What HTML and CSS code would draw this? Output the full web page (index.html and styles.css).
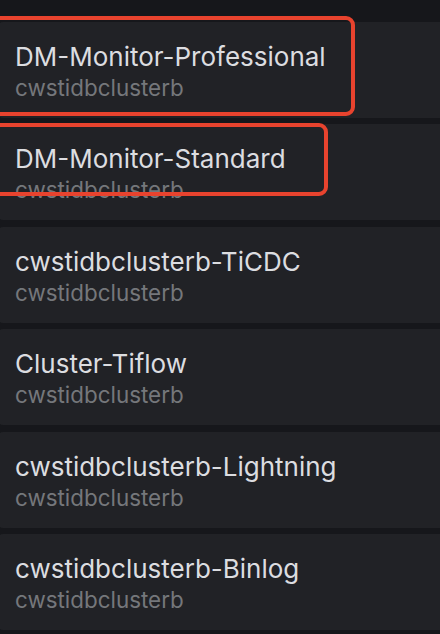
FILE: index.html
```html
<!DOCTYPE html>
<html lang="en">
<head>
    <meta charset="UTF-8">
    <meta name="viewport" content="width=device-width, initial-scale=1.0">
    <title>Dashboards</title>
    <link rel="stylesheet" href="styles.css">
</head>
<body>
    <div class="list">
        <div class="item">
            <div class="item-title">DM-Monitor-Professional</div>
            <div class="item-sub">cwstidbclusterb</div>
        </div>
        <div class="item">
            <div class="item-title">DM-Monitor-Standard</div>
            <div class="item-sub">cwstidbclusterb</div>
        </div>
        <div class="item">
            <div class="item-title">cwstidbclusterb-TiCDC</div>
            <div class="item-sub">cwstidbclusterb</div>
        </div>
        <div class="item">
            <div class="item-title">Cluster-Tiflow</div>
            <div class="item-sub">cwstidbclusterb</div>
        </div>
        <div class="item">
            <div class="item-title">cwstidbclusterb-Lightning</div>
            <div class="item-sub">cwstidbclusterb</div>
        </div>
        <div class="item">
            <div class="item-title">cwstidbclusterb-Binlog</div>
            <div class="item-sub">cwstidbclusterb</div>
        </div>
    </div>

    <!-- annotation boxes drawn over the list -->
    <div class="mark mark-one"></div>
    <div class="mark mark-two"></div>
</body>
</html>
```

FILE: styles.css
```css
* {
    margin: 0;
    padding: 0;
    box-sizing: border-box;
}

body {
    background-color: #16171b;
    font-family: Inter, Roboto, sans-serif;
    width: 440px;
    height: 634px;
    overflow: hidden;
    position: relative;
}

.list {
    padding-top: 22px;
    margin-left: -1px;
    margin-right: -10px;
}

.item {
    height: 96px;
    margin-bottom: 6.4px;
    background-color: #212226;
    border-radius: 4px;
    padding: 19px 0 0 16px;
}

.item-title {
    font-size: 26px;
    line-height: 31px;
    color: #dcdde0;
}

.item-sub {
    font-size: 22.4px;
    line-height: 32px;
    color: #75777b;
}

.mark {
    position: absolute;
    border: 4px solid #e8432e;
    border-radius: 9px;
}

.mark-one {
    left: -12px;
    top: 16px;
    width: 367px;
    height: 100px;
}

.mark-two {
    left: -12px;
    top: 123px;
    width: 340px;
    height: 73px;
}
```
